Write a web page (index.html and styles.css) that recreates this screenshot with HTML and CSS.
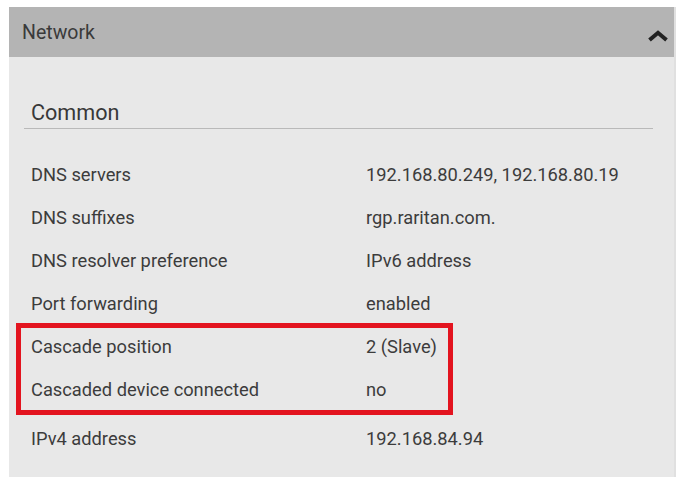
FILE: index.html
```html
<!DOCTYPE html>
<html lang="en">
<head>
<meta charset="utf-8">
<title>Network</title>
<link rel="stylesheet" href="styles.css">
</head>
<body>
<div class="panel">
  <div class="panel-header">
    <span class="panel-title">Network</span>
    <svg class="chevron" width="22" height="12" viewBox="0 0 22 12" aria-hidden="true">
      <path d="M2.5 10 L11 2.8 L19.5 10" fill="none" stroke="#222" stroke-width="4" stroke-linejoin="miter"/>
    </svg>
  </div>
  <div class="panel-body">
    <h2 class="section-title">Common</h2>
    <div class="rows">
      <div class="row"><span class="label">DNS servers</span><span class="value">192.168.80.249, 192.168.80.19</span></div>
      <div class="row"><span class="label">DNS suffixes</span><span class="value">rgp.raritan.com.</span></div>
      <div class="row"><span class="label">DNS resolver preference</span><span class="value">IPv6 address</span></div>
      <div class="row"><span class="label">Port forwarding</span><span class="value">enabled</span></div>
      <div class="group">
        <div class="row"><span class="label">Cascade position</span><span class="value">2 (Slave)</span></div>
        <div class="row"><span class="label">Cascaded device connected</span><span class="value">no</span></div>
      </div>
      <div class="row row-last"><span class="label">IPv4 address</span><span class="value">192.168.84.94</span></div>
    </div>
  </div>
</div>
</body>
</html>
```

FILE: styles.css
```css
html, body {
  margin: 0;
  padding: 0;
  background: #ffffff;
}

body {
  font-family: Roboto, "Liberation Sans", Arial, sans-serif;
  color: #3c3c3c;
}

.panel {
  margin: 7px 0 0 9px;
  width: 667px;
  height: 470px;
  background: #e8e8e8;
  box-sizing: border-box;
  border-right: 2px solid #e0e0e0;
}

.panel-header {
  height: 50px;
  background: #b4b4b4;
  display: flex;
  align-items: center;
  justify-content: space-between;
  padding: 0 5px 0 13px;
  box-sizing: border-box;
}

.panel-title {
  font-size: 19.5px;
  color: #3a3a3a;
}

.chevron {
  display: block;
  margin-top: 8px;
}

.panel-body {
  padding: 43px 21px 0 15px;
}

.section-title {
  margin: 0;
  font-weight: normal;
  font-size: 21.6px;
  line-height: 25px;
  color: #383838;
  padding: 0 0 3px 7px;
  border-bottom: 1px solid #b9b9b9;
}

.rows {
  padding: 24px 0 0 7px;
}

.row {
  display: flex;
  height: 43px;
  line-height: 43px;
  font-size: 18.3px;
  white-space: nowrap;
}

.label {
  width: 335px;
  flex: none;
}

.value {
  flex: 1;
}

.group {
  position: relative;
}

.group::after {
  content: "";
  position: absolute;
  left: -15px;
  top: -2px;
  width: 437px;
  height: 92px;
  box-sizing: border-box;
  border: 5px solid #e3141f;
  pointer-events: none;
}

.row-last {
  margin-top: 6px;
}
```
